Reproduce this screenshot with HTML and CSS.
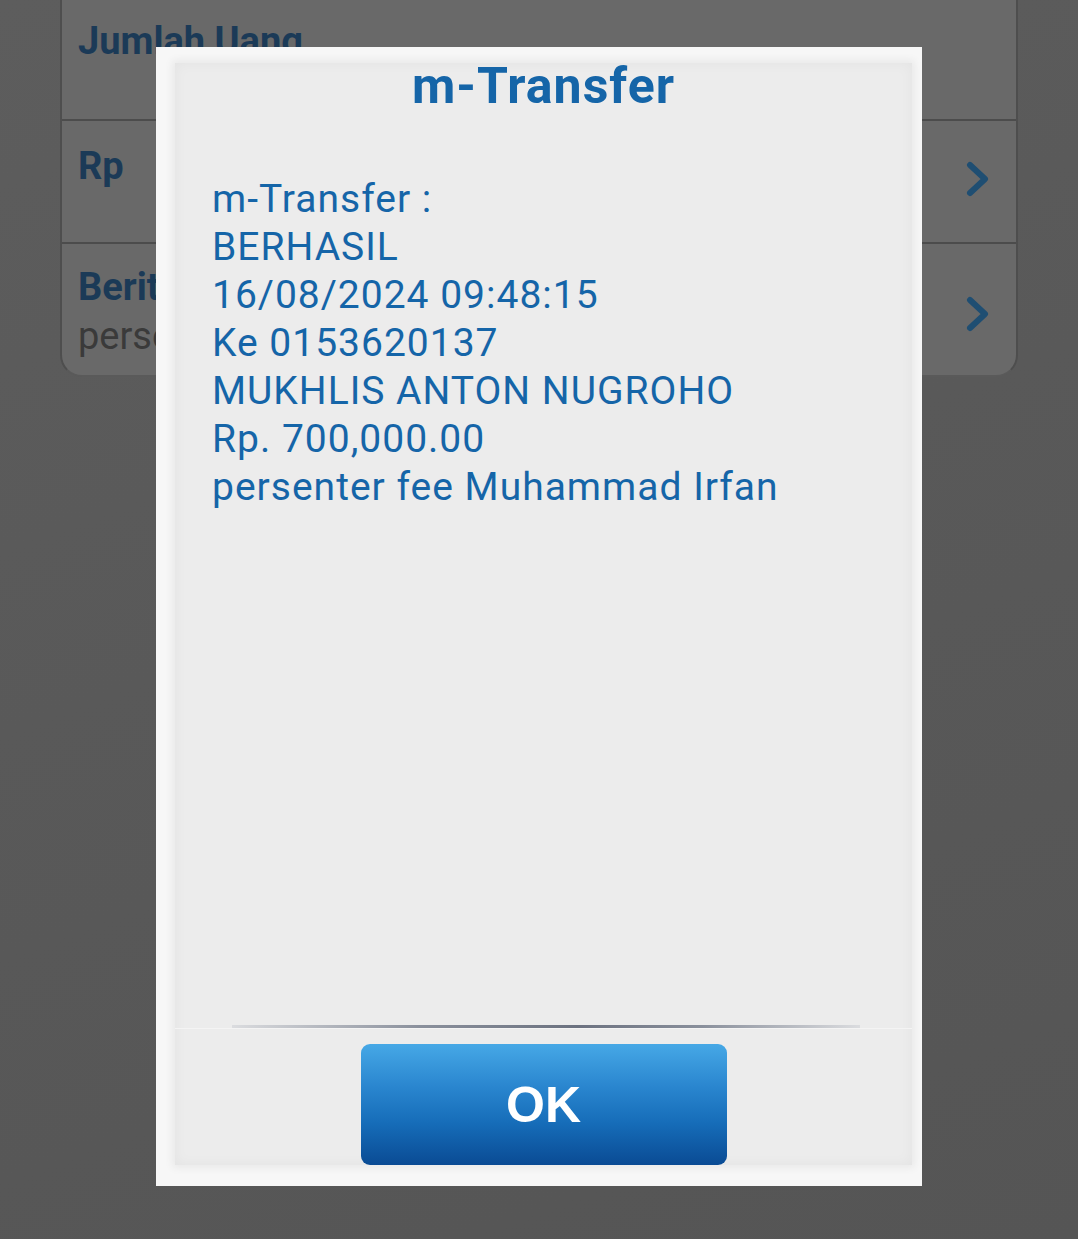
FILE: index.html
```html
<!DOCTYPE html>
<html lang="id">
<head>
<meta charset="utf-8">
<title>m-Transfer</title>
<link rel="stylesheet" href="styles.css">
</head>
<body>
<div class="screen">
  <div class="card">
    <div class="row row-1">
      <div class="row-label">Jumlah Uang</div>
    </div>
    <div class="row row-2">
      <div class="row-label">Rp</div>
      <svg class="chev" viewBox="0 0 24 36" width="24" height="36"><path d="M4 4 L19 18 L4 32" fill="none" stroke="#1f4e72" stroke-width="6" stroke-linecap="round" stroke-linejoin="round"/></svg>
    </div>
    <div class="row row-3">
      <div class="row-text">
        <div class="row-label">Berita</div>
        <div class="row-sub">persenter fee Muhammad Irfan</div>
      </div>
      <svg class="chev" viewBox="0 0 24 36" width="24" height="36"><path d="M4 4 L19 18 L4 32" fill="none" stroke="#1f4e72" stroke-width="6" stroke-linecap="round" stroke-linejoin="round"/></svg>
    </div>
  </div>

  <div class="dialog">
    <div class="panel">
      <h1 class="title">m-Transfer</h1>
      <div class="message">
        <div>m-Transfer :</div>
        <div>BERHASIL</div>
        <div>16/08/2024 09:48:15</div>
        <div>Ke 0153620137</div>
        <div>MUKHLIS ANTON NUGROHO</div>
        <div>Rp. 700,000.00</div>
        <div>persenter fee Muhammad Irfan</div>
      </div>
      <div class="divider"></div>
      <div class="actions">
        <button class="ok">OK</button>
      </div>
    </div>
  </div>
</div>
</body>
</html>
```

FILE: styles.css
```css
* { box-sizing: border-box; }
html, body {
  margin: 0;
  padding: 0;
}
body {
  width: 1078px;
  height: 1239px;
  overflow: hidden;
  background: #5a5a5a;
  font-family: Roboto, "Noto Sans", sans-serif;
}
.screen {
  position: relative;
  width: 1078px;
  height: 1239px;
  background: linear-gradient(160deg, #5d5d5d 0%, #595959 45%, #555555 100%);
}
.card {
  margin-left: 60px;
  width: 958px;
  background: #696969;
  border-left: 2px solid #4e4e4e;
  border-right: 2px solid #4e4e4e;
  border-bottom: 2px solid #5a5a5a;
  border-radius: 0 0 22px 22px;
  display: flex;
  flex-direction: column;
}
.row {
  display: flex;
  align-items: flex-start;
  justify-content: space-between;
  padding: 0 26px 0 16px;
}
.row-1 {
  height: 121px;
  border-bottom: 2px solid #4c4c4c;
  padding-top: 16px;
}
.row-2 {
  height: 123px;
  border-bottom: 2px solid #4c4c4c;
  padding-top: 20px;
}
.row-3 {
  height: 131px;
  padding-top: 18px;
}
.row-label {
  font-family: Roboto, sans-serif;
  font-weight: 700;
  font-size: 38px;
  line-height: 50px;
  color: #1b3a57;
}
.row-sub {
  font-family: Roboto, sans-serif;
  font-size: 38px;
  line-height: 48px;
  color: #3a3a3a;
}
.chev {
  margin-top: 20px;
}
.row-3 .chev {
  margin-top: 34px;
}

.dialog {
  position: absolute;
  left: 156px;
  top: 47px;
  width: 766px;
  height: 1139px;
  background: #f7f7f7;
  padding: 16px 10px 21px 19px;
}
.panel {
  height: 100%;
  background: #ececec;
  box-shadow: 0 0 8px 3px rgba(0,0,0,0.06), inset 0 0 14px rgba(0,0,0,0.04);
  display: flex;
  flex-direction: column;
}
.title {
  margin: 0;
  text-align: center;
  font-family: Roboto, sans-serif;
  font-weight: 700;
  font-size: 50px;
  line-height: 50px;
  height: 50px;
  color: #1565a8;
  letter-spacing: 1px;
  margin-top: -2px;
}
.message {
  flex: 1;
  padding: 64px 0 0 37px;
  font-family: Roboto, sans-serif;
  font-size: 39px;
  line-height: 48px;
  letter-spacing: 1px;
  color: #1565a8;
}
.divider {
  height: 3px;
  margin: 0 52px 0 57px;
  background: linear-gradient(90deg, rgba(150,156,170,0.2) 0%, #8a909c 30%, #6c7280 55%, #8a909c 75%, rgba(150,156,170,0.2) 100%);
}
.actions {
  height: 137px;
  display: flex;
  justify-content: center;
  align-items: flex-end;
  border-top: 1px solid #f4f4f4;
}
.ok {
  width: 366px;
  height: 121px;
  border: none;
  border-radius: 9px;
  background: linear-gradient(180deg, #46a8e6 0%, #2a86cf 35%, #166db9 65%, #0a4b94 100%);
  color: #ffffff;
  font-family: "Liberation Sans", Arial, sans-serif;
  font-weight: 700;
  font-size: 50px;
  padding: 0;
}
```
